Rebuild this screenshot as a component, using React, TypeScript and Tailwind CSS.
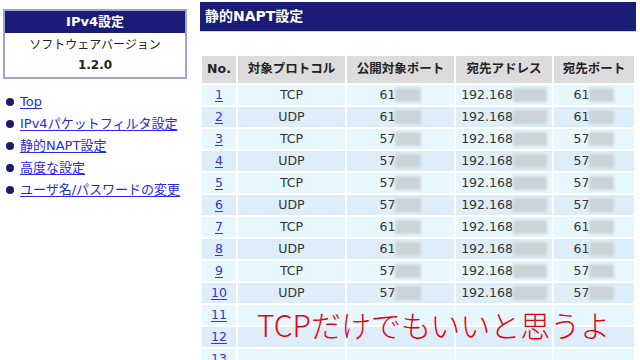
import React from 'react';

type Row = { no: number; proto: string; pub: string; dst: string; dport: string };

const rows: Row[] = [
  { no: 1, proto: 'TCP', pub: '61', dst: '192.168', dport: '61' },
  { no: 2, proto: 'UDP', pub: '61', dst: '192.168', dport: '61' },
  { no: 3, proto: 'TCP', pub: '57', dst: '192.168', dport: '57' },
  { no: 4, proto: 'UDP', pub: '57', dst: '192.168', dport: '57' },
  { no: 5, proto: 'TCP', pub: '57', dst: '192.168', dport: '57' },
  { no: 6, proto: 'UDP', pub: '57', dst: '192.168', dport: '57' },
  { no: 7, proto: 'TCP', pub: '61', dst: '192.168', dport: '61' },
  { no: 8, proto: 'UDP', pub: '61', dst: '192.168', dport: '61' },
  { no: 9, proto: 'TCP', pub: '57', dst: '192.168', dport: '57' },
  { no: 10, proto: 'UDP', pub: '57', dst: '192.168', dport: '57' },
  { no: 11, proto: '', pub: '', dst: '', dport: '' },
  { no: 12, proto: '', pub: '', dst: '', dport: '' },
  { no: 13, proto: '', pub: '', dst: '', dport: '' },
  { no: 14, proto: '', pub: '', dst: '', dport: '' },
];

const navItems = ['Top', 'IPv4パケットフィルタ設定', '静的NAPT設定', '高度な設定', 'ユーザ名/パスワードの変更'];

// masked value: visible prefix + blurred remainder
const Masked = ({ text, w }: { text: string; w: string }) =>
  text ? (
    <span className="inline-flex items-center">
      <span>{text}</span>
      <span className={`inline-block ${w} h-[14px] bg-[#ccd3d7] blur-[1.5px]`} />
    </span>
  ) : null;

export default function App() {
  return (
    <div className="relative w-[640px] h-[360px] overflow-hidden bg-white flex font-['DejaVu_Sans','Noto_Sans_CJK_JP',sans-serif] text-[#333]">
      {/* left column */}
      <div className="w-[200px] shrink-0">
        <div className="ml-[3px] mt-[9px] w-[184px] border-2 border-[#a3a3cf] bg-white pb-[4px]">
          <div className="h-[22px] bg-[#1b1b78] text-white font-bold text-[13px] flex items-center justify-center">
            IPv4設定
          </div>
          <div className="h-[24px] flex items-center justify-center text-[12px] text-[#222]">
            ソフトウェアバージョン
          </div>
          <div className="h-[16px] flex items-center justify-center text-[12px] font-bold text-[#222]">
            1.2.0
          </div>
        </div>

        <ul className="mt-[12px] ml-[6px]">
          {navItems.map((item) => (
            <li key={item} className="h-[22px] flex items-center gap-[6px] text-[13px]">
              <span className="w-[8px] h-[8px] rounded-full bg-[#1b1b6e]" />
              <a className="text-[#2a2ae0] underline underline-offset-2 decoration-1">{item}</a>
            </li>
          ))}
        </ul>
      </div>

      {/* right column */}
      <div className="w-[436px] pt-[2px]">
        <div className="h-[30px] bg-[#1b1b78] border-b border-[#d0d0ee] flex items-center pl-[5px] text-white font-bold text-[14px]">
          静的NAPT設定
        </div>

        <table className="mt-[22px] table-fixed border-separate border-spacing-[2px] text-[12.5px]">
          <thead>
            <tr className="h-[27px] bg-[#dcdcdc] text-[#222] font-bold">
              <th className="w-[34px] p-0">No.</th>
              <th className="w-[107px] p-0">対象プロトコル</th>
              <th className="w-[107px] p-0">公開対象ポート</th>
              <th className="w-[96px] p-0">宛先アドレス</th>
              <th className="w-[80px] p-0">宛先ポート</th>
            </tr>
          </thead>
          <tbody>
            {rows.map((r) => (
              <tr key={r.no} className={`h-[20px] ${r.no % 2 === 1 ? 'bg-[#e7f7fe]' : 'bg-[#ddeefa]'}`}>
                <td className="p-0 text-center">
                  <a className="text-[#3535d0] underline underline-offset-2">{r.no}</a>
                </td>
                <td className="p-0 text-center">{r.proto}</td>
                <td className="p-0 text-center">
                  <Masked text={r.pub} w="w-[26px]" />
                </td>
                <td className="p-0 text-center">
                  <Masked text={r.dst} w="w-[34px]" />
                </td>
                <td className="p-0 text-center">
                  <Masked text={r.dport} w="w-[25px]" />
                </td>
              </tr>
            ))}
          </tbody>
        </table>
      </div>

      {/* handwritten note */}
      <div className="absolute left-[257px] top-[309px] text-[30px] leading-none font-light text-[#e60012] font-['Noto_Sans_CJK_JP',sans-serif]">
        TCPだけでもいいと思うよ
      </div>
    </div>
  );
}
